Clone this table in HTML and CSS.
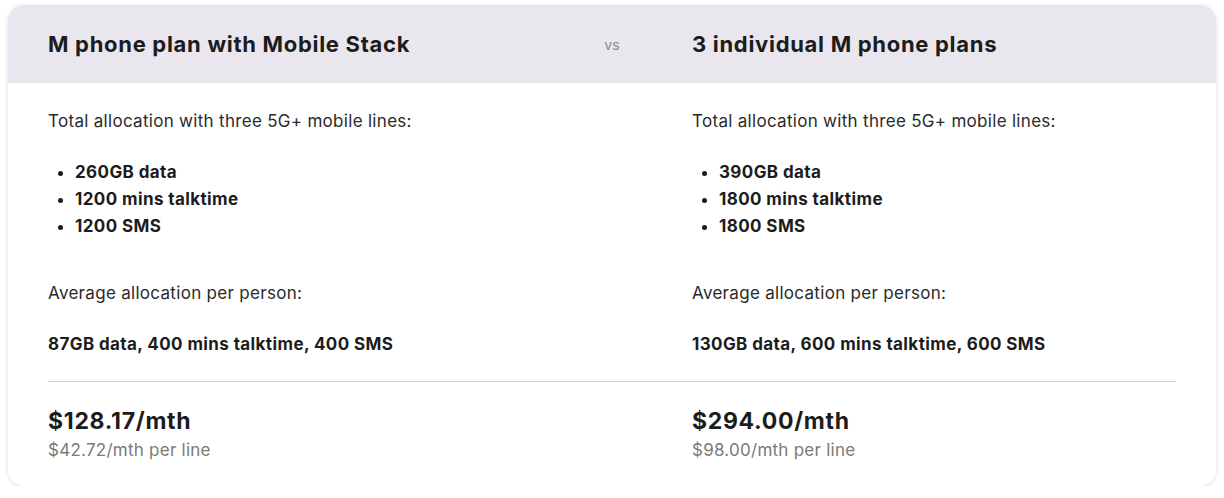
FILE: index.html
```html
<!DOCTYPE html>
<html lang="en">
<head>
<meta charset="utf-8">
<link rel="stylesheet" href="styles.css">
</head>
<body>
<div class="card">
  <div class="head cols">
    <h2 class="title">M phone plan with Mobile Stack</h2>
    <div class="vs">vs</div>
    <h2 class="title">3 individual M phone plans</h2>
  </div>
  <div class="body">
    <div class="cols">
      <div class="plan">
        <p class="label">Total allocation with three 5G+ mobile lines:</p>
        <ul class="list">
          <li>260GB data</li>
          <li>1200 mins talktime</li>
          <li>1200 SMS</li>
        </ul>
        <p class="label avg">Average allocation per person:</p>
        <p class="strong">87GB data, 400 mins talktime, 400 SMS</p>
      </div>
      <div></div>
      <div class="plan">
        <p class="label">Total allocation with three 5G+ mobile lines:</p>
        <ul class="list">
          <li>390GB data</li>
          <li>1800 mins talktime</li>
          <li>1800 SMS</li>
        </ul>
        <p class="label avg">Average allocation per person:</p>
        <p class="strong">130GB data, 600 mins talktime, 600 SMS</p>
      </div>
    </div>
    <hr class="divider">
    <div class="cols">
      <div class="price-block">
        <div class="price">$128.17/mth</div>
        <div class="per">$42.72/mth per line</div>
      </div>
      <div></div>
      <div class="price-block">
        <div class="price">$294.00/mth</div>
        <div class="per">$98.00/mth per line</div>
      </div>
    </div>
  </div>
</div>
</body>
</html>
```
FILE: styles.css
```css
* { box-sizing: border-box; }
html, body { margin: 0; padding: 0; background: #fff; }
body {
  padding: 5px 8px 0 8px;
  font-family: Inter, "Liberation Sans", Arial, sans-serif;
  color: #1c1c1c;
}
.card {
  width: 1208px;
  height: 481px;
  border-radius: 16px;
  overflow: hidden;
  background: #fff;
  box-shadow: 0 1px 4px rgba(0, 0, 0, 0.14);
}
.cols {
  display: grid;
  grid-template-columns: 484px 160px 484px;
  padding: 0 40px;
}
.head {
  background: #e9e6ee;
  height: 78px;
  align-items: center;
}
.title {
  margin: 0;
  font-size: 22px;
  line-height: 28px;
  font-weight: 700;
  letter-spacing: 0.7px;
  color: #1c1c1c;
}
.vs {
  text-align: center;
  font-size: 14px;
  color: #8a8a8a;
}
.body { padding-top: 26px; }
.body .cols { padding: 0; margin: 0 40px; }
.label {
  margin: 0;
  font-size: 17px;
  line-height: 24px;
  letter-spacing: 0.3px;
  color: #2a2a2a;
}
.list {
  margin: 26px 0 0 0;
  padding: 0 0 0 27px;
  font-size: 17px;
  line-height: 27px;
  font-weight: 700;
  letter-spacing: 0.4px;
}
.avg { margin-top: 41px; }
.strong {
  margin: 27px 0 0 0;
  font-size: 17px;
  line-height: 24px;
  font-weight: 700;
  letter-spacing: 0.4px;
}
.divider {
  margin: 25px 40px 0 40px;
  border: 0;
  border-top: 1px solid #d2d2d2;
  height: 0;
}
.price-block { padding-top: 24px; }
.price {
  font-size: 23px;
  line-height: 30px;
  font-weight: 700;
  letter-spacing: 0.7px;
}
.per {
  margin-top: 2px;
  font-size: 17px;
  line-height: 24px;
  letter-spacing: 0.25px;
  color: #7a7a7a;
}
```
